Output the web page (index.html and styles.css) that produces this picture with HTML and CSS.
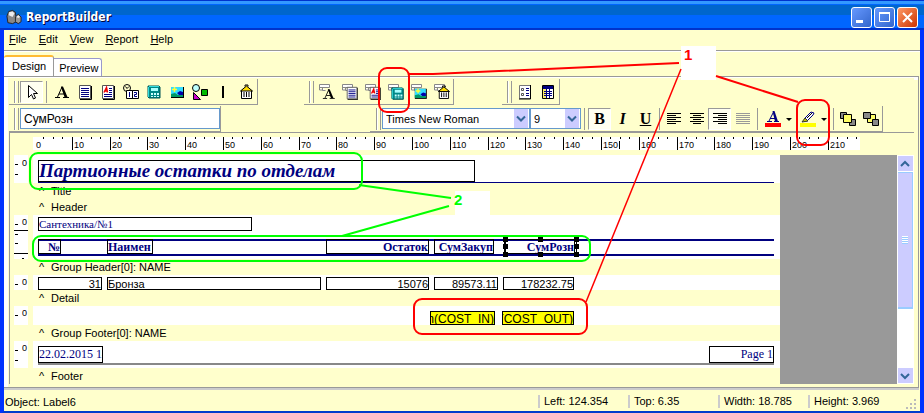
FILE: index.html
```html
<!DOCTYPE html>
<html lang="ru">
<head>
<meta charset="utf-8">
<title>ReportBuilder</title>
<link rel="stylesheet" href="styles.css">
</head>
<body>
<svg class="defs" aria-hidden="true">
  <defs>
    <g id="i-a"><path d="M1 13.500h5M9 13.500h6M3.500 13 8 3M7.500 3l4 10M5 10h5" stroke="#000" stroke-width="1" fill="none"/><path d="M7 2.500h2L13.500 13h-3z"/></g>
    <g id="i-memo"><path d="M2.500 1.500h11v13h-11z" fill="#fff" stroke="#555"/><path d="M14.500 2v13.500H3" stroke="#000" fill="none"/><path d="M4 4.500h8M4 6.500h8M4 8.500h8M4 10.500h8M4 12.500h8" stroke="#000080"/></g>
    <g id="i-rich"><path d="M2.500 1.500h11v13h-11z" fill="#fff" stroke="#555"/><path d="M14.500 2v13.500H3" stroke="#000" fill="none"/><path d="M9 4.500h3M9 6.500h3M9 8.500h3M4 10.500h8M4 12.500h8" stroke="#000080"/><path d="M4 8.500 6.500 3.500 7.500 8.500M5 7h2" stroke="#e00" stroke-width="1.500" fill="none"/></g>
    <g id="i-calc"><path d="M2 2h11l1 1v11H3l-1-1z" fill="#088" stroke="#055"/><path d="M3 2.500h10M2.500 3v10" stroke="#3dd"/><path d="M5 4h7v3H5z" fill="#aff"/><path d="M5 9h2v2H5zM8 9h2v2H8zM11 9h2v2h-2zM5 12h2v1H5zM8 12h2v1H8zM11 12h2v1h-2z" fill="#cff"/></g>
    <g id="i-img"><path d="M2 3h13v11H2z" fill="#000"/><path d="M2 3h12v9H2z" fill="#3df"/><path d="M2 13v-3l4-1 3 2 5-2v4z" fill="#096"/><path d="M8 9l3-2 3 1v3l-4 0z" fill="#00a"/><path d="M5.500 3v5M3 5.500h5" stroke="#ff3" stroke-width="1.500"/></g>
    <g id="i-bar"><path d="M3.500 6.500h10v8h-10z" fill="#fff" stroke="#000"/><path d="M2.500 7 8.500 2l6 5z" fill="#fd0" stroke="#000"/><path d="M7 2.500V1h3v1.500M6 8v5M8.500 8v5M11 8v5" stroke="#000" fill="none"/></g>
    <g id="i-db"><path d="M.5.500h10v3h-10zM3.500 3.500v3h3M.5 3v3h3" fill="#fff" stroke="#888"/></g>
  </defs>
</svg>
<div class="window">
  <header class="titlebar">
    <svg class="appicon" viewBox="0 0 17 17"><path d="M1 7 3 2l4-1 3 2 1 10-4 2-5-1z" fill="#888" stroke="#222"/><path d="M3 3l4-1 2 2-2 4-4-2z" fill="#eee"/><path d="M10 8l3-3 3 3v5l-3 2-3-2z" fill="#999" stroke="#222"/><path d="M11 8l2-2 2 2-2 1z" fill="#eee"/></svg>
    <h1>ReportBuilder</h1>
    <div class="winbtns">
      <button aria-label="Minimize"><svg viewBox="0 0 19 19"><path d="M4 12h7v3H4z" fill="#fff"/></svg></button>
      <button aria-label="Maximize"><svg viewBox="0 0 19 19"><path d="M4.500 4.500h10v9h-10z" fill="none" stroke="#fff"/><path d="M4 5h11" stroke="#fff" stroke-width="2"/></svg></button>
      <button class="close" aria-label="Close"><svg viewBox="0 0 19 19"><path d="M5 5l9 9M14 5l-9 9" stroke="#fff" stroke-width="2"/></svg></button>
    </div>
  </header>
  <nav class="menu">
    <a href="#"><u>F</u>ile</a><a href="#"><u>E</u>dit</a><a href="#"><u>V</u>iew</a><a href="#"><u>R</u>eport</a><a href="#"><u>H</u>elp</a>
  </nav>
  <div class="tabs"><button class="tab active">Design</button><button class="tab">Preview</button></div>

  <main class="page">
    <div class="toolrow">
      <div class="toolbar">
        <span class="grip"></span>
        <button class="tool on" aria-label="Select"><svg viewBox="0 0 16 16"><path d="M4.500 1.500v12l3-3 2 4.500 2-1-2-4.500h4z" fill="#fff" stroke="#000"/></svg></button>
        <span class="sep"></span>
        <button class="tool" aria-label="Label"><svg viewBox="0 0 16 16"><use href="#i-a"/></svg></button>
        <button class="tool" aria-label="Memo"><svg viewBox="0 0 16 16"><use href="#i-memo"/></svg></button>
        <button class="tool" aria-label="Rich text"><svg viewBox="0 0 16 16"><use href="#i-rich"/></svg></button>
        <button class="tool" aria-label="System variable"><svg viewBox="0 0 16 16"><circle cx="4" cy="4" r="3.500" fill="#ffc" stroke="#000"/><path d="M2.500 2.500 4 4.500 6 2.500" stroke="#000" fill="none"/><path d="M3.500 6.500h6v8h-6zM9.500 6.500h6v8h-6z" fill="#fff" stroke="#000"/><path d="M6.500 8v5M11 8.500h2.500v2h-2v2h2.500" stroke="#000080" fill="none"/></svg></button>
        <button class="tool" aria-label="Variable"><svg viewBox="0 0 16 16"><use href="#i-calc"/></svg></button>
        <button class="tool" aria-label="Image"><svg viewBox="0 0 16 16"><use href="#i-img"/></svg></button>
        <button class="tool" aria-label="Shape"><svg viewBox="0 0 16 16"><circle cx="4" cy="4" r="3.500" fill="#bff" stroke="#000"/><path d="M9.500 5.500h6v6h-6z" fill="#0b0" stroke="#000"/><path d="M1.500 8.500v7h7z" fill="#c0c" stroke="#000"/></svg></button>
        <button class="tool" aria-label="Line"><svg viewBox="0 0 16 16"><path d="M8 2v12" stroke="#000" stroke-width="2"/></svg></button>
        <button class="tool" aria-label="Barcode"><svg viewBox="0 0 16 16"><use href="#i-bar"/></svg></button>
      </div>
      <div class="toolbar data">
        <span class="grip"></span>
        <button class="tool" aria-label="DB text"><svg viewBox="0 0 16 16"><use href="#i-db"/><use href="#i-a" transform="translate(3 3) scale(.85)"/></svg></button>
        <button class="tool" aria-label="DB memo"><svg viewBox="0 0 16 16"><use href="#i-db"/><use href="#i-memo" transform="translate(3 2) scale(.88)"/></svg></button>
        <button class="tool" aria-label="DB rich text"><svg viewBox="0 0 16 16"><use href="#i-db"/><use href="#i-rich" transform="translate(3 2) scale(.88)"/></svg></button>
        <button class="tool" aria-label="DB calc"><svg viewBox="0 0 16 16"><use href="#i-db"/><use href="#i-calc" transform="translate(2 2) scale(.95)"/></svg></button>
        <button class="tool" aria-label="DB image"><svg viewBox="0 0 16 16"><use href="#i-db"/><use href="#i-img" transform="translate(2 2) scale(.92)"/></svg></button>
        <button class="tool" aria-label="DB barcode"><svg viewBox="0 0 16 16"><use href="#i-db"/><use href="#i-bar" transform="translate(2 1) scale(.93)"/></svg></button>
      </div>
      <div class="toolbar adv">
        <span class="grip"></span>
        <button class="tool" aria-label="Region"><svg viewBox="0 0 16 16"><path d="M2.500 1.500h11v13h-11z" fill="#fff" stroke="#777"/><path d="M13.500 1v14H2" stroke="#000" fill="none"/><path d="M4.500 4.500h2v2h-2zM4.500 9.500h2v2h-2z" stroke="#555" fill="none"/><path d="M9 4.500h3M9 6.500h3M9 9.500h3M9 11.500h3" stroke="#000080"/></svg></button>
        <button class="tool" aria-label="Crosstab"><svg viewBox="0 0 16 16"><path d="M2.500 1.500h11v13h-11z" fill="#fff" stroke="#000"/><path d="M3 2h10v3H3z" fill="#000080"/><path d="M3 5h3v9H3z" fill="#fe6"/><path d="M6.500 5v9M9.500 5v9" stroke="#000080"/><path d="M4 7.500h8M4 9.500h8M4 11.500h8" stroke="#000080" stroke-dasharray="2 1"/></svg></button>
      </div>
    </div>
    <div class="toolrow">
      <div class="toolbar edit">
        <span class="grip"></span>
        <input class="caption-input" type="text" value="СумРозн" aria-label="Caption">
      </div>
      <div class="toolbar format">
        <span class="grip"></span>
        <div class="combo font"><select aria-label="Font"><option>Times New Roman</option></select><svg viewBox="0 0 14 18"><path d="M3 7l4 4 4-4" /></svg></div>
        <div class="combo size"><select aria-label="Font size"><option>9</option></select><svg viewBox="0 0 14 18"><path d="M3 7l4 4 4-4" /></svg></div>
        <span class="sep"></span>
        <button class="tool on txt"><b>B</b></button>
        <button class="tool txt"><i>I</i></button>
        <button class="tool txt"><u>U</u></button>
        <span class="sep thin"></span>
        <button class="tool" aria-label="Align left"><svg viewBox="0 0 16 16"><path d="M1 2.500h14M1 4.500h9M1 6.500h14M1 8.500h9M1 10.500h14M1 12.500h9" stroke="#000"/></svg></button>
        <button class="tool" aria-label="Center"><svg viewBox="0 0 16 16"><path d="M1 2.500h14M4 4.500h8M1 6.500h14M4 8.500h8M1 10.500h14M4 12.500h8" stroke="#000"/></svg></button>
        <button class="tool on" aria-label="Align right"><svg viewBox="0 0 16 16"><path d="M1 2.500h14M6 4.500h9M1 6.500h14M6 8.500h9M1 10.500h14M6 12.500h9" stroke="#000"/></svg></button>
        <button class="tool" aria-label="Justify"><svg viewBox="0 0 16 16"><path d="M1 2.500h14M1 4.500h14M1 6.500h14M1 8.500h14M1 10.500h14M1 12.500h14" stroke="#999"/></svg></button>
        <span class="sep"></span>
        <button class="tool wide" aria-label="Font color"><svg viewBox="0 0 30 18"><path d="M4 11.500h5M11 11.500h5M6 11 10.500 2M7 8.500h6" stroke="#000080" fill="none"/><path d="M9.500 1h2L15 11.500h-3z" fill="#000080"/><path d="M2 13h16v4H2z" fill="#f00"/><path d="M23 8h6l-3 3z"/></svg></button>
        <button class="tool wide" aria-label="Highlight color"><svg viewBox="0 0 30 18"><path d="M6 11l1-3 6-6 3 1-1 2-6 6z" fill="#fff" stroke="#000080"/><path d="M4 12l3-4 3 3z" fill="#cc0" stroke="#333"/><path d="M9 8l5-5" stroke="#000" stroke-width="1"/><path d="M2 13h16v4H2z" fill="#ff0"/><path d="M23 8h6l-3 3z"/></svg></button>
        <span class="sep thin"></span>
        <button class="tool" aria-label="Bring to front"><svg viewBox="0 0 16 16"><path d="M.5 1.500h6v6h-6zM9.500 8.500h6v6h-6z" fill="#888" stroke="#000"/><path d="M3.500 3.500h8v8h-8z" fill="#ff6" stroke="#000"/></svg></button>
        <button class="tool" aria-label="Send to back"><svg viewBox="0 0 16 16"><path d="M4.500 3.500h8v8h-8z" fill="#ff6" stroke="#000"/><path d="M.5 1.500h7v6h-7zM9.500 8.500h6v6h-6z" fill="#888" stroke="#000"/></svg></button>
      </div>
    </div>

    <section class="designer">
      <svg class="ruler" id="ruler"></svg>
      <div class="workspace">
        <div class="bands">
          <div class="band b-title">
            <svg class="vruler"><path d="M1 9.500h3M1 19.500h3" stroke="#000"/><text x="8" y="11">0</text></svg>
            <div class="surface">
              <div class="item title">Партионные остатки по отделам</div>
              <div class="rule r1"></div>
            </div>
          </div>
          <div class="caption"><i>^</i>Title</div>
          <div class="caption"><i>^</i>Header</div>
          <div class="band b-group">
            <svg class="vruler"><path d="M1 9.500h3M0 15.500h14M1 19.500h3M1 28.500h3M0 38.500h14M8 43.500h2" stroke="#000"/><text x="8" y="10">0</text></svg>
            <div class="surface">
              <div class="item shop">Сантехника/№1</div>
              <div class="rule r2"></div><div class="rule r3"></div>
              <div class="item head h-no">№</div>
              <div class="item head h-name">Наимен</div>
              <div class="item head h-rest">Остаток</div>
              <div class="item head h-in">СумЗакуп</div>
              <div class="item head h-out">СумРозн</div>
              <svg class="handles" viewBox="0 0 76 20"><path d="M2.500 2v16M73.500 2v16" stroke="#000"/><path d="M0 0h5v5H0zM35 0h5v5h-5zM71 0h5v5h-5zM0 7h5v5H0zM71 7h5v5h-5zM0 15h5v5H0zM35 15h5v5h-5zM71 15h5v5h-5z"/></svg>
            </div>
          </div>
          <div class="caption"><i>^</i>Group Header[0]: NAME</div>
          <div class="band b-detail">
            <svg class="vruler"><path d="M1 9.500h3" stroke="#000"/><text x="8" y="10">0</text></svg>
            <div class="surface">
              <div class="item cell c-no">31</div>
              <div class="item cell c-name">Бронза</div>
              <div class="item cell c-rest">15076</div>
              <div class="item cell c-in">89573.11</div>
              <div class="item cell c-out">178232.75</div>
            </div>
          </div>
          <div class="caption"><i>^</i>Detail</div>
          <div class="band b-sum">
            <svg class="vruler"><path d="M1 9.500h3" stroke="#000"/><text x="8" y="10">0</text></svg>
            <div class="surface">
              <div class="item sum s-in">Sum(COST_IN)</div>
              <div class="item sum s-out">Sum(COST_OUT)</div>
            </div>
          </div>
          <div class="caption"><i>^</i>Group Footer[0]: NAME</div>
          <div class="band b-foot">
            <svg class="vruler"><path d="M1 9.500h3M1 19.500h3" stroke="#000"/><text x="8" y="10">0</text></svg>
            <div class="surface">
              <div class="item foot f-date">22.02.2015 14:</div>
              <div class="item foot f-page">Page 1</div>
              <div class="rule r4"></div>
            </div>
          </div>
          <div class="caption"><i>^</i>Footer</div>
        </div>
        <div class="void"></div>
        <div class="scroll">
          <button aria-label="Scroll up"><svg viewBox="0 0 14 14"><path d="M3 9l4-4 4 4"/></svg></button>
          <div class="thumb"></div>
          <div class="track"></div>
          <button aria-label="Scroll down"><svg viewBox="0 0 14 14"><path d="M3 5l4 4 4-4"/></svg></button>
        </div>
      </div>
    </section>
  </main>

  <footer class="status">
    <span class="object">Object: Label6</span>
    <span class="panel">Left: 124.354</span>
    <span class="panel">Top: 6.35</span>
    <span class="panel">Width: 18.785</span>
    <span class="panel last">Height: 3.969</span>
    <svg class="sizegrip" viewBox="0 0 12 12"><path d="M8 0h2v2H8zM4 4h2v2H4zM8 4h2v2H8zM0 8h2v2H0zM4 8h2v2H4zM8 8h2v2H8z" fill="#bbb"/></svg>
  </footer>
</div>

<svg class="notes" width="924" height="413" viewBox="0 0 924 413">
  <path d="M681 46h35v34h-35zM455 191h35v24h-35z" fill="#fff"/>
  <g fill="none" stroke="#f00" stroke-width="2">
    <rect x="379" y="68" width="30" height="44" rx="8"/>
    <rect x="797" y="100" width="32" height="45" rx="8"/>
    <rect x="414" y="299" width="173" height="35" rx="8"/>
    <path d="M409 74h24L679 63M716 76l82 26"/>
    <path d="M681 69 586 302" stroke-width="1.500"/>
  </g>
  <g fill="none" stroke="#0f0" stroke-width="2">
    <rect x="30" y="153" width="332" height="36" rx="8"/>
    <rect x="33" y="236" width="557" height="25" rx="8"/>
    <path d="M359 185l92 13M449 206l-107 30"/>
  </g>
  <text x="684" y="60" fill="#f00">1</text>
  <text x="454" y="205" fill="#0f0">2</text>
</svg>
<script src="ruler.js"></script>
</body>
</html>
```
FILE: styles.css
```css
* { box-sizing: border-box; }
body {
  margin: 0;
  font: 11px/16px "Liberation Sans", Arial, sans-serif;
  color: #000;
}
button { font: inherit; color: inherit; padding: 0; border: 0; background: none; }
.defs { position: absolute; width: 0; height: 0; }

.window {
  display: flex;
  flex-direction: column;
  min-height: 100vh;
  background: #ffc;
  border: solid #03f;
  border-width: 0 4px 4px;
  border-color: #03f #03f #003ccc;
}
.titlebar {
  display: flex;
  align-items: center;
  gap: 4px;
  height: 30px;
  margin: 0 -4px;
  padding: 4px 6px 0;
  background: linear-gradient(#03c 0 1px, #39f 1px 4px, #06f 4px 5px, #06c 5px 15px, #06f 15px 28px, #03c 28px);
}
.appicon { width: 16px; height: 17px; }
.titlebar h1 {
  flex: 1;
  margin: 0;
  font: bold 12px/18px "DejaVu Sans Condensed", "DejaVu Sans", sans-serif;
  color: #fff;
  text-shadow: 1px 1px #003;
}
.winbtns { display: flex; gap: 2px; }
.winbtns button {
  width: 21px;
  height: 21px;
  border: 1px solid #fff;
  border-radius: 3px;
  background: linear-gradient(135deg, #69f, #36c);
}
.winbtns .close { background: linear-gradient(135deg, #f96, #c30); }
.winbtns svg { display: block; width: 19px; height: 19px; }

.menu {
  display: flex;
  gap: 12px;
  height: 21px;
  padding: 1px 5px 0;
  border-bottom: 1px solid #999;
  box-shadow: 0 1px #fff;
}
.menu a { color: #000; text-decoration: none; }
.tabs { display: flex; align-items: flex-end; height: 25px; }
.tab {
  height: 18px;
  padding: 0 3px 0 5px;
  background: #fff;
  border: 1px solid #99c;
  border-width: 1px 1px 0 0;
  border-radius: 0 3px 0 0;
}
.tab.active {
  height: 21px;
  padding: 0 7px 2px 8px;
  border: 0;
  border-top: 2px solid #fb3;
  border-right: 1px solid #999;
  border-radius: 3px 3px 0 0;
}

.page {
  flex: 1;
  display: flex;
  flex-direction: column;
  margin-right: 1px;
  padding: 2px 4px 3px;
  border: solid #999;
  border-width: 0 1px 1px 0;
  box-shadow: inset 0 1px #999, inset 4px 0 #fff, inset 0 4px #fff, 0 2px #ccc;
}
.toolrow { display: flex; height: 27px; padding: 1px 0 0 1px; }
.toolbar {
  display: flex;
  align-items: center;
  height: 26px;
  padding-left: 5px;
  border: solid #999;
  border-width: 0 1px 1px 0;
}
.data { margin-left: 46px; }
.adv { margin-left: 48px; }
.grip {
  width: 5px;
  height: 22px;
  margin-right: 1px;
  border: solid #999;
  border-width: 0 1px;
  background: linear-gradient(90deg, #fff 0 1px, #ffc 1px);
}
.sep { width: 1px; height: 22px; margin: 0 3px; background: #999; }
.sep.thin { margin: 0 2px; }
.tool { display: flex; align-items: center; justify-content: center; width: 23px; height: 22px; }
.tool.on { background: #fffff0; border: 1px solid; border-color: #999 #fff #fff #999; }
.tool svg { width: 16px; height: 16px; }
.tool.wide { width: 35px; justify-content: flex-start; padding-left: 2px; }
.tool.wide svg { width: 30px; height: 18px; }
.tool.txt { font: bold 16px/20px "Liberation Serif", serif; }
.caption-input {
  width: 200px;
  height: 21px;
  padding: 0 3px;
  font-family: inherit;
  font-size: 12px;
  border: 1px solid #69c;
  background: #fff;
}
.format { margin-left: 149px; padding-left: 6px; }
.combo { position: relative; height: 21px; border: 1px solid #69c; background: #fff; }
.combo select {
  width: 100%;
  height: 100%;
  padding: 0 3px;
  border: 0;
  appearance: none;
  background: none;
  font: inherit;
}
.combo svg { position: absolute; right: 1px; top: 0; width: 14px; height: 19px; background: #ccf; pointer-events: none; }
.combo path, .scroll path { fill: none; stroke: #369; stroke-width: 2; }
.font { width: 148px; }
.size { width: 51px; }

.designer {
  flex: 1;
  margin: 0 0 0 1px;
  padding: 4px 0 0;
  border-left: 1px solid #999;
  border-top: 1px solid #999;
}
.designer, .toolrow { background: #ffc; }
.ruler { display: block; width: 827px; height: 13px; margin: 0 0 5px 23px; background: #fff; }
.ruler text, .vruler text { font: 9px "Liberation Sans", sans-serif; }
.workspace { display: flex; }
.bands { width: 770px; }
.band { display: flex; gap: 5px; padding-left: 4px; }
.vruler { width: 14px; height: auto; background: #fff; }
.surface { position: relative; flex: 1; background: #fff; }
.b-title { height: 28px; }
.b-group { height: 44px; }
.b-detail { height: 15px; }
.b-sum { height: 19px; }
.b-foot { height: 27px; }
.caption { display: flex; height: 16px; padding-left: 29px; }
.caption i { width: 12px; font-style: normal; }
.void { flex: 1; background: #999; }

.item {
  position: absolute;
  display: flex;
  overflow: hidden;
  white-space: nowrap;
  border: 1px solid #000;
  color: #000080;
  font: 12px/13px "Liberation Serif", serif;
}
.rule { position: absolute; left: 5px; width: 736px; height: 2px; background: #000080; }
.title { left: 5px; top: 5px; width: 437px; height: 22px; font: italic bold 19px/19px "Liberation Serif", serif; }
.r1 { top: 27px; height: 1px; }
.shop { left: 5px; top: 2px; width: 214px; height: 14px; font-size: 11px; }
.r2 { top: 24px; }
.r3 { top: 39px; }
.head { top: 24px; height: 15px; justify-content: flex-end; font-weight: bold; line-height: 14px; }
.h-no { left: 5px; width: 23px; }
.h-name { left: 74px; width: 46px; justify-content: flex-start; }
.h-rest { left: 293px; width: 103px; }
.h-in { left: 401px; width: 60px; }
.h-out { left: 471px; width: 71px; }
.handles { position: absolute; left: 470px; top: 22px; width: 76px; height: 20px; }
.cell { top: 2px; height: 13px; justify-content: flex-end; color: #000; font: 11px/12px "Liberation Sans", sans-serif; }
.c-no { left: 5px; width: 64px; }
.c-name { left: 74px; width: 214px; justify-content: flex-start; }
.c-rest { left: 293px; width: 103px; }
.c-in { left: 401px; width: 64px; }
.c-out { left: 470px; width: 71px; }
.sum { top: 5px; height: 14px; justify-content: flex-end; background: #ff0; color: #000; font: 12px/14px "Liberation Sans", sans-serif; }
.s-in { left: 397px; width: 65px; }
.s-out { left: 469px; width: 72px; }
.foot { top: 5px; height: 17px; line-height: 15px; }
.f-date { left: 5px; width: 65px; }
.f-page { left: 676px; width: 65px; justify-content: flex-end; }
.r4 { top: 22px; background: #888; }

.scroll { display: flex; flex-direction: column; width: 17px; padding: 1px; background: #fff; }
.scroll button { height: 15px; background: #ccf; }
.scroll button svg { display: block; width: 14px; height: 14px; }
.thumb {
  height: 137px;
  margin: 1px 0;
  border: solid #9cf;
  border-width: 1px 1px 2px 0;
  background: repeating-linear-gradient(#fff 0 1px, #9cf 1px 2px) 50% 50% / 6px 8px no-repeat #ccf;
}
.track { flex: 1; }

.status {
  display: flex;
  align-items: center;
  height: 21px;
  margin-top: 2px;
  padding: 2px 2px 0 1px;
}
.object { flex: 1; }
.panel { width: 90px; padding-left: 4px; border-left: 2px solid #ccc; line-height: 13px; }
.panel.last { width: 98px; }
.sizegrip { width: 12px; height: 12px; align-self: flex-end; }

.notes { position: absolute; left: 0; top: 0; pointer-events: none; }
.notes text { font: bold 15px "Liberation Sans", sans-serif; }
```
FILE: ruler.js
```js
// Millimetre ruler: a short tick every 2.5 mm, a long one with its number every 10 mm.
const PX_PER_MM = 3.78;
const ruler = document.getElementById('ruler');
let marks = '';
for (let q = 0; q * 2.5 < 218; q++) {
  const x = Math.round(q * 2.5 * PX_PER_MM) + 1;
  const major = q % 4 === 0;
  if (q > 0) marks += `<rect x="${x}" y="0" width="1" height="${major ? 13 : 2}"/>`;
  if (major) marks += `<text x="${x + 2}" y="11">${q * 2.5}</text>`;
}
marks += '<rect x="586" y="4" width="1" height="8"/>';
ruler.innerHTML = marks;
```
